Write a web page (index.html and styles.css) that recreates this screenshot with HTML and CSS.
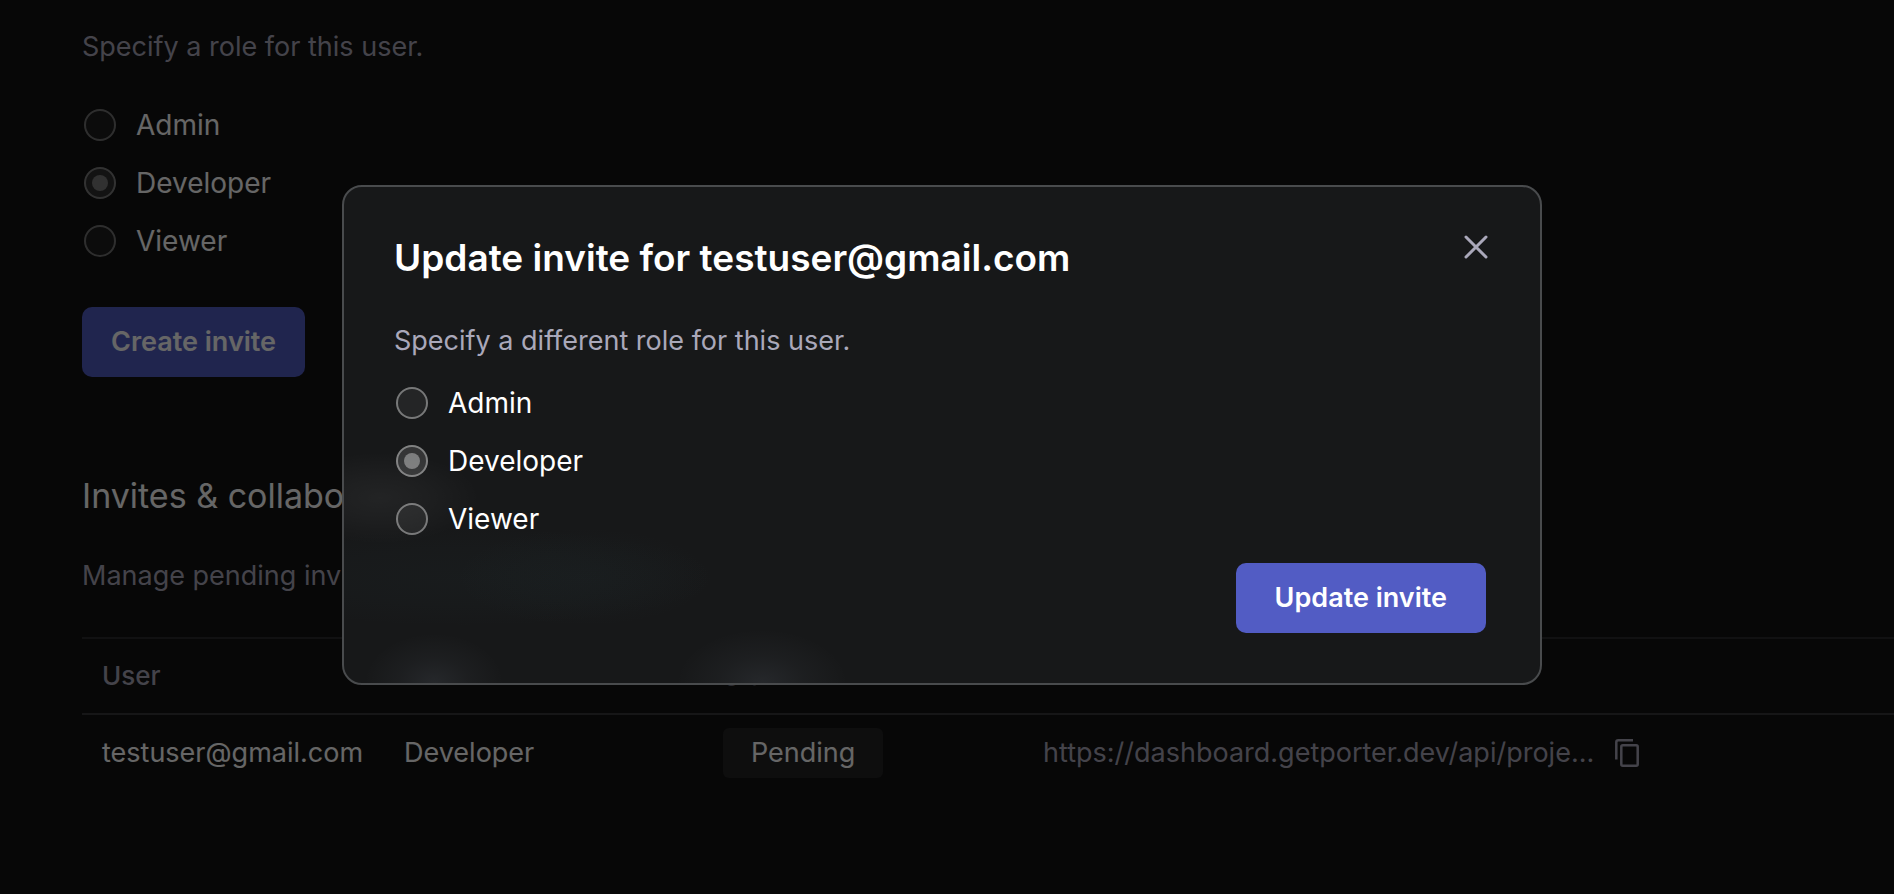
FILE: index.html
```html
<!DOCTYPE html>
<html lang="en">
<head>
<meta charset="utf-8">
<meta name="viewport" content="width=device-width, initial-scale=1">
<title>Project settings</title>
<link rel="stylesheet" href="styles.css">
</head>
<body>
<main class="page">
  <form class="invite-form">
    <p class="helper" id="role-help">Specify a role for this user.</p>
    <div class="radio-list page-radios" role="radiogroup" aria-labelledby="role-help">
      <label class="radio-row"><input class="radio" type="radio" name="role" value="admin">Admin</label>
      <label class="radio-row"><input class="radio" type="radio" name="role" value="developer" checked>Developer</label>
      <label class="radio-row"><input class="radio" type="radio" name="role" value="viewer">Viewer</label>
    </div>
    <button class="button" type="button">Create invite</button>
  </form>

  <section class="collaborators">
    <h2 class="heading">Invites &amp; collaborators</h2>
    <p class="helper">Manage pending invites and edit team roles.</p>
    <table class="table">
      <colgroup><col class="col-user"><col class="col-role"><col class="col-status"><col></colgroup>
      <thead>
        <tr><th>User</th><th>Role</th><th>Status</th><th></th></tr>
      </thead>
      <tbody>
        <tr>
          <td>testuser@gmail.com</td>
          <td>Developer</td>
          <td><span class="status">Pending</span></td>
          <td>
            <div class="invite-link">
              <span class="url">https://dashboard.getporter.dev/api/proje...</span>
              <button class="icon-button" type="button" aria-label="Copy invite link">
                <svg width="28" height="30" viewBox="0 0 28 30" fill="none" stroke="currentColor" stroke-width="2.5" stroke-linejoin="round"><path d="M2.3 21.5V4.3a2 2 0 0 1 2-2H19"/><rect x="7.3" y="7.3" width="16.4" height="20.4" rx="1.5"/></svg>
              </button>
            </div>
          </td>
        </tr>
      </tbody>
    </table>
  </section>
</main>

<div class="overlay">
  <form class="modal" role="dialog" aria-modal="true" aria-labelledby="modal-title">
    <header class="modal-header">
      <h1 class="modal-title" id="modal-title">Update invite for testuser@gmail.com</h1>
      <button class="icon-button" type="button" aria-label="Close">
        <svg width="24" height="24" viewBox="0 0 24 24" fill="none" stroke="currentColor" stroke-width="3" stroke-linecap="round"><path d="M2 2l20 20M22 2L2 22"/></svg>
      </button>
    </header>
    <p class="helper modal-helper" id="new-role-help">Specify a different role for this user.</p>
    <div class="radio-list" role="radiogroup" aria-labelledby="new-role-help">
      <label class="radio-row"><input class="radio" type="radio" name="new-role" value="admin">Admin</label>
      <label class="radio-row"><input class="radio" type="radio" name="new-role" value="developer" checked>Developer</label>
      <label class="radio-row"><input class="radio" type="radio" name="new-role" value="viewer">Viewer</label>
    </div>
    <button class="button modal-submit" type="button">Update invite</button>
  </form>
</div>
</body>
</html>
```

FILE: styles.css
```css
* {
  box-sizing: border-box;
}

body {
  margin: 0;
  min-height: 100vh;
  overflow: hidden;
  background: #121212;
  color: #fff;
  font-family: Inter, "Open Sans", sans-serif;
  font-size: 27px;
  line-height: 32px;
}

p, h1, h2 {
  margin: 0;
}

button, input {
  font: inherit;
}

.page {
  padding: 31px 0 0 82px;
}

.helper {
  color: #aaa8ba;
}

.radio-list {
  display: flex;
  flex-direction: column;
  gap: 26px;
  padding-left: 2px;
}

.page-radios {
  margin: 46px 0 50px;
}

.radio-row {
  display: flex;
  align-items: center;
  gap: 20px;
  align-self: flex-start;
  font-size: 28px;
}

.radio {
  appearance: none;
  display: grid;
  place-items: center;
  width: 32px;
  height: 32px;
  margin: 0;
  border: 2px solid rgba(255, 255, 255, 0.38);
  border-radius: 50%;
  background: rgba(255, 255, 255, 0.06);
}

.radio:checked {
  background: rgba(255, 255, 255, 0.13);
}

.radio:checked::before {
  content: "";
  width: 16px;
  height: 16px;
  border-radius: 50%;
  background: rgba(255, 255, 255, 0.36);
}

.button {
  height: 70px;
  padding: 0 29px;
  border: 0;
  border-radius: 10px;
  background: #525cc4;
  color: #fff;
  font-weight: 600;
}

.collaborators {
  margin-top: 101px;
}

.heading {
  margin-bottom: 46px;
  font-size: 34px;
  font-weight: 400;
  line-height: 36px;
}

.table {
  width: 100%;
  margin-top: 45px;
  border-collapse: collapse;
  table-layout: fixed;
}

.col-user {
  width: 302px;
}

.col-role {
  width: 319px;
}

.col-status {
  width: 320px;
}

.table th,
.table td {
  height: 76px;
  padding: 0 0 0 20px;
  text-align: left;
  white-space: nowrap;
}

.table thead tr {
  border-top: 2px solid #2b2b2d;
  border-bottom: 2px solid #38383a;
}

.table th {
  color: #aaa8ba;
  font-size: 26px;
  font-weight: 500;
}

.status {
  display: inline-flex;
  align-items: center;
  height: 50px;
  padding: 0 28px;
  border-radius: 6px;
  background: #232324;
}

.invite-link {
  display: flex;
  align-items: center;
  gap: 20px;
  color: #aaa8ba;
}

.icon-button {
  display: flex;
  padding: 0;
  border: 0;
  background: none;
  color: #aaa8ba;
}

.overlay {
  position: fixed;
  inset: 0;
  display: flex;
  align-items: center;
  justify-content: center;
  padding: 0 10px 24px 0;
  background: rgba(0, 0, 0, 0.6);
}

.modal {
  display: flex;
  flex-direction: column;
  width: 1200px;
  max-width: 90%;
  padding: 48px 52px 50px 50px;
  border: 2px solid #494b4d;
  border-radius: 20px;
  background:
    radial-gradient(100px 46px at 36px 311px, rgba(255, 255, 255, 0.05), rgba(255, 255, 255, 0.03) 45%, transparent),
    radial-gradient(260px 50px at 120px 390px, rgba(70, 130, 140, 0.03), rgba(70, 130, 140, 0.02) 55%, transparent),
    radial-gradient(130px 50px at 240px 390px, rgba(70, 130, 140, 0.03), rgba(70, 130, 140, 0.02) 50%, transparent),
    radial-gradient(70px 50px at 90px 100%, rgba(210, 225, 255, 0.08), rgba(210, 225, 255, 0.03) 50%, transparent),
    radial-gradient(86px 54px at 418px 100%, rgba(210, 225, 255, 0.08), rgba(210, 225, 255, 0.03) 50%, transparent),
    #171819;
}

.modal-header {
  display: flex;
  align-items: flex-start;
  justify-content: space-between;
}

.modal-title {
  font-size: 37px;
  font-weight: 600;
  line-height: 46px;
}

.modal-helper {
  margin: 44px 0 30px;
}

.modal-submit {
  align-self: flex-end;
  margin: 28px 2px 0 0;
  padding: 0 39px;
}
```
